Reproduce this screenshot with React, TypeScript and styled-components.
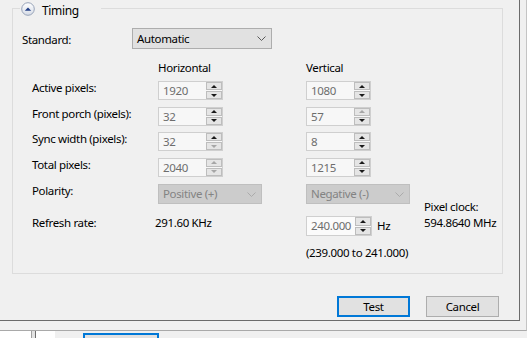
import * as React from "react";
import styled, { createGlobalStyle } from "styled-components";

const GlobalStyle = createGlobalStyle`
  html, body {
    margin: 0;
    padding: 0;
    background: #f0f0f0;
  }
  body {
    font-family: "Noto Sans", "Open Sans", sans-serif;
    font-size: 11.5px;
    letter-spacing: -0.35px;
    color: #000;
  }
`;

const Screen = styled.div`
  width: 527px;
  height: 338px;
  overflow: hidden;
  display: flex;
  flex-direction: column;
  background: #f0f0f0;
`;

const OuterWindow = styled.div`
  width: 527px;
  height: 331px;
  box-sizing: border-box;
  border-right: 1px solid #c4c4c4;
  border-bottom: 1px solid #a9a9a9;
`;

const Dialog = styled.div`
  width: 520px;
  height: 321px;
  box-sizing: border-box;
  border-right: 1px solid #6b6b6b;
  border-bottom: 1px solid #6b6b6b;
  padding: 0 16px 0 12px;
  display: flex;
  flex-direction: column;
`;

const GroupBox = styled.fieldset`
  margin: 0;
  padding: 0 0 12px 0;
  min-width: 0;
  border: 1px solid #dcdcdc;
`;

const GroupLegend = styled.legend`
  margin-left: 7px;
  padding: 0 0 0 1px;
  width: 81px;
  height: 17px;
  box-sizing: border-box;
  display: flex;
  align-items: center;
  gap: 7px;
  line-height: 16px;
`;

const LegendText = styled.span`
  font-size: 12px;
  margin-top: 4px;
`;

const GroupContent = styled.div`
  padding-left: 9px;
  display: flex;
  flex-direction: column;
`;

const StandardRow = styled.div`
  margin-top: 11px;
  display: flex;
  align-items: center;
`;

const StandardLabel = styled.span`
  width: 110px;
  line-height: 16px;
  margin-top: 2px;
`;

const ComboBox = styled.div<{ $width: number; $disabled?: boolean }>`
  width: ${(p) => p.$width}px;
  height: ${(p) => (p.$disabled ? 20 : 21)}px;
  box-sizing: border-box;
  display: flex;
  align-items: center;
  justify-content: space-between;
  padding: 0 5px 0 4px;
  border: 1px solid ${(p) => (p.$disabled ? "#bfbfbf" : "#adadad")};
  background: ${(p) => (p.$disabled ? "#cccccc" : "#e1e1e1")};
  color: ${(p) => (p.$disabled ? "#838383" : "#000")};
  line-height: 16px;
`;

const Chevron = ({ color }: { color: string }) => (
  <svg width="9" height="5" viewBox="0 0 9 5">
    <polyline points="0.5,0.5 4.5,4.5 8.5,0.5" fill="none" stroke={color} strokeWidth="1" />
  </svg>
);

const TimingGrid = styled.div`
  margin-top: 11px;
  padding-left: 10px;
  display: grid;
  grid-template-columns: 126px 148px 118px 1fr;
  grid-template-rows: 21px 25.5px 25.5px 25.5px 26.5px 32px 29px 16px;
  align-items: start;
`;

const ColumnHead = styled.span`
  line-height: 16px;
`;

const RowLabel = styled.span`
  line-height: 16px;
  margin-top: -1px;
`;

const SpinFrame = styled.div<{ $width: number; $height: number; $bright?: boolean }>`
  width: ${(p) => p.$width}px;
  height: ${(p) => p.$height}px;
  box-sizing: border-box;
  display: flex;
  border: 1px solid #cfcfcf;
  background: ${(p) => (p.$bright ? "#fbfbfb" : "#f7f7f7")};
`;

const SpinValue = styled.span`
  flex: 1;
  padding-left: 4px;
  color: #6d6d6d;
  display: flex;
  align-items: center;
`;

const SpinButtons = styled.div`
  width: 16px;
  display: flex;
  flex-direction: column;
  gap: 1px;
`;

const SpinHalf = styled.div`
  flex: 1;
  display: flex;
  align-items: center;
  justify-content: center;
  background: #e5e5e5;
  border: 1px solid #bdbdbd;
`;

const Arrow = styled.span<{ $dir: "up" | "down"; $dim?: boolean }>`
  width: 0;
  height: 0;
  border-left: 3px solid transparent;
  border-right: 3px solid transparent;
  ${(p) => (p.$dir === "up" ? "border-bottom" : "border-top")}: 3px solid
    ${(p) => (p.$dim ? "#a6a6a6" : "#1a1a1a")};
`;

type SpinProps = {
  value: string;
  width?: number;
  height?: number;
  upDim?: boolean;
  downDim?: boolean;
  bright?: boolean;
};

const SpinBox = ({ value, width = 65, height = 19, upDim, downDim, bright }: SpinProps) => (
  <SpinFrame $width={width} $height={height} $bright={bright}>
    <SpinValue>{value}</SpinValue>
    <SpinButtons>
      <SpinHalf>
        <Arrow $dir="up" $dim={upDim} />
      </SpinHalf>
      <SpinHalf>
        <Arrow $dir="down" $dim={downDim} />
      </SpinHalf>
    </SpinButtons>
  </SpinFrame>
);

const PlainValue = styled.span`
  line-height: 16px;
  margin-top: -1px;
  margin-left: -3px;
`;

const RateCell = styled.div`
  display: flex;
  align-items: center;
  gap: 5px;
  line-height: 16px;
`;

const PixelClock = styled.div`
  grid-column: 4;
  grid-row: 6 / span 2;
  padding-top: 15px;
  display: flex;
  flex-direction: column;
  line-height: 16px;
  white-space: nowrap;
`;

const RangeNote = styled.span`
  grid-column: 3 / span 2;
  line-height: 16px;
`;

const ButtonRow = styled.div`
  margin-top: 22px;
  padding-right: 4px;
  display: flex;
  justify-content: flex-end;
  gap: 16px;
`;

const DialogButton = styled.button<{ $focused?: boolean }>`
  width: 73px;
  height: 21px;
  box-sizing: border-box;
  margin: 0;
  padding: 0;
  font: inherit;
  letter-spacing: inherit;
  color: #000;
  background: #e1e1e1;
  border: ${(p) => (p.$focused ? "2px solid #0078d7" : "1px solid #adadad")};
  line-height: 16px;
`;

const BehindStrip = styled.div`
  height: 7px;
  display: flex;
`;

const WhitePane = styled.div<{ $width: number }>`
  width: ${(p) => p.$width}px;
  background: #fff;
`;

const PaneEdge = styled.div<{ $color: string }>`
  width: 1px;
  background: ${(p) => p.$color};
`;

const PaneGap = styled.div`
  width: 3px;
  background: #e3e3e3;
`;

const GrayPane = styled.div`
  flex: 1;
  padding-left: 28px;
  padding-top: 2px;
  background: #f0f0f0;
`;

const BehindButton = styled.div`
  width: 76px;
  height: 10px;
  box-sizing: border-box;
  border: 2px solid #0078d7;
  background: #e1e1e1;
`;

const CollapseIcon = () => (
  <svg width="14" height="14" viewBox="0 0 14 14">
    <defs>
      <linearGradient id="collapseFill" x1="0" y1="0" x2="0" y2="1">
        <stop offset="0" stopColor="#ffffff" />
        <stop offset="1" stopColor="#d5dbe6" />
      </linearGradient>
    </defs>
    <circle cx="7" cy="7" r="6.3" fill="url(#collapseFill)" stroke="#97a3b8" strokeWidth="1" />
    <polygon points="3.8,8.8 10.2,8.8 7,5.4" fill="#223f86" />
  </svg>
);

const rows = [
  { label: "Active pixels:", h: { value: "1920" }, v: { value: "1080" } },
  { label: "Front porch (pixels):", h: { value: "32" }, v: { value: "57", upDim: true } },
  { label: "Sync width (pixels):", h: { value: "32", downDim: true }, v: { value: "8" } },
  { label: "Total pixels:", h: { value: "2040", upDim: true, downDim: true }, v: { value: "1215" } },
];

export default function App() {
  return (
    <Screen>
      <GlobalStyle />
      <OuterWindow>
        <Dialog>
          <GroupBox>
            <GroupLegend>
              <CollapseIcon />
              <LegendText>Timing</LegendText>
            </GroupLegend>
            <GroupContent>
              <StandardRow>
                <StandardLabel>Standard:</StandardLabel>
                <ComboBox $width={140}>
                  <span>Automatic</span>
                  <Chevron color="#5a5a5a" />
                </ComboBox>
              </StandardRow>
              <TimingGrid>
                <span />
                <ColumnHead>Horizontal</ColumnHead>
                <ColumnHead>Vertical</ColumnHead>
                <span />
                {rows.map((r) => (
                  <React.Fragment key={r.label}>
                    <RowLabel>{r.label}</RowLabel>
                    <SpinBox {...r.h} />
                    <SpinBox {...r.v} />
                    <span />
                  </React.Fragment>
                ))}
                <RowLabel>Polarity:</RowLabel>
                <ComboBox $width={104} $disabled>
                  <span>Positive (+)</span>
                  <Chevron color="#ababab" />
                </ComboBox>
                <ComboBox $width={104} $disabled>
                  <span>Negative (-)</span>
                  <Chevron color="#ababab" />
                </ComboBox>
                <PixelClock>
                  <span>Pixel clock:</span>
                  <span>594.8640 MHz</span>
                </PixelClock>
                <RowLabel>Refresh rate:</RowLabel>
                <PlainValue>291.60 KHz</PlainValue>
                <RateCell>
                  <SpinBox value="240.000" width={66} height={20} bright />
                  <span>Hz</span>
                </RateCell>
                <span />
                <RangeNote>(239.000 to 241.000)</RangeNote>
              </TimingGrid>
            </GroupContent>
          </GroupBox>
          <ButtonRow>
            <DialogButton $focused>Test</DialogButton>
            <DialogButton>Cancel</DialogButton>
          </ButtonRow>
        </Dialog>
      </OuterWindow>
      <BehindStrip>
        <WhitePane $width={31} />
        <PaneEdge $color="#a0a0a0" />
        <PaneGap />
        <PaneEdge $color="#6d6d6d" />
        <WhitePane $width={19} />
        <GrayPane>
          <BehindButton />
        </GrayPane>
      </BehindStrip>
    </Screen>
  );
}
